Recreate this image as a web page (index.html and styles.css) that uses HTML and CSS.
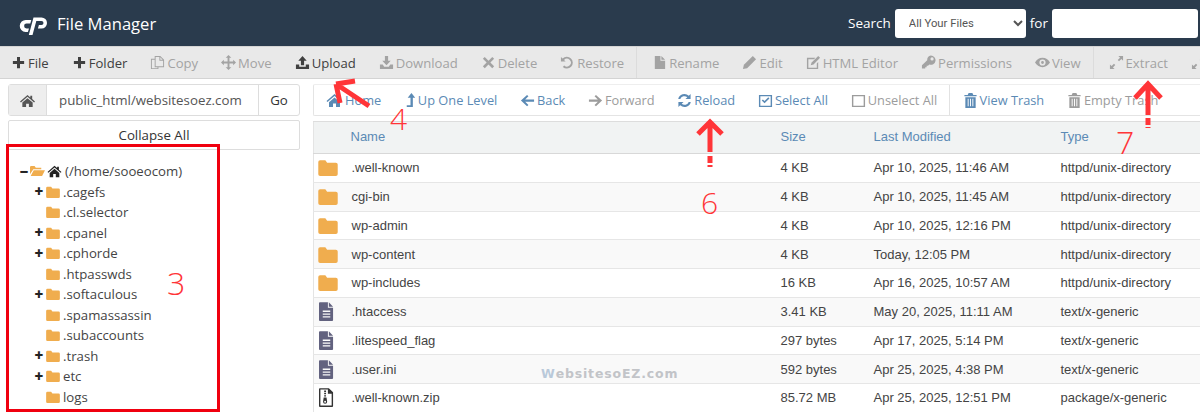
FILE: index.html
```html
<!DOCTYPE html>
<html lang="en">
<head>
<meta charset="utf-8">
<title>File Manager</title>
<link rel="stylesheet" href="styles.css">
</head>
<body>
<svg class="sprite" width="0" height="0">
  <symbol id="i-plus" viewBox="0 0 16 16"><path d="M6.400 2h3.200v4.400H14v3.200H9.600V14H6.400V9.600H2V6.400h4.400z"/></symbol>
  <symbol id="i-copy" viewBox="0 0 16 16"><path fill-rule="evenodd" d="M5 1h6l4 4v8H9v2H1V4h4zm1 1v10h8V6h-4V2zm5 .5V5h2.500zM2 5v9h6v-1H5V5z"/></symbol>
  <symbol id="i-move" viewBox="0 0 16 16"><path d="M8 0l3 3H9v4h4V5l3 3-3 3V9H9v4h2l-3 3-3-3h2V9H3v2L0 8l3-3v2h4V3H5z"/></symbol>
  <symbol id="i-upload" viewBox="0 0 16 16"><path d="M8 1l4.500 5H9.700v5H6.300V6H3.500zM1 10h3.500v2.500h7V10H15v5H1z"/></symbol>
  <symbol id="i-download" viewBox="0 0 16 16"><path d="M6.300 1h3.400v5h2.800L8 11 3.500 6h2.800zM1 10h3l1.500 2.500h5L12 10h3v5H1z"/></symbol>
  <symbol id="i-x" viewBox="0 0 16 16"><path d="M4 2l4 4 4-4 2 2-4 4 4 4-2 2-4-4-4 4-2-2 4-4-4-4z"/></symbol>
  <symbol id="i-undo" viewBox="0 0 16 16"><path d="M1 2l1.800 1.800A6.300 6.300 0 1 1 3 12.800l1.500-1.500a4.200 4.200 0 1 0-.2-6L6 7H1z"/></symbol>
  <symbol id="i-file" viewBox="0 0 16 16"><path d="M3 1h6v5h5v9H3zM10 1l4 4h-4z"/></symbol>
  <symbol id="i-pencil" viewBox="0 0 16 16"><path d="M11.500 1L15 4.500 5.500 14 1 15l1-4.500z"/></symbol>
  <symbol id="i-edit" viewBox="0 0 16 16"><path fill-rule="evenodd" d="M1 3h9L8.500 4.500H2.500v9h9V9L13 7.500V15H1z"/><path d="M13 1l2 2-7 7-3 1 1-3z"/></symbol>
  <symbol id="i-key" viewBox="0 0 16 16"><path fill-rule="evenodd" d="M10.500 0.500a5 5 0 1 1-1.700 9.700L7.500 11.500H6V13H4.500v1.500H1V11l5.600-5.500A5 5 0 0 1 10.500 0.500zm1.300 2a1.700 1.700 0 1 0 0 3.400 1.700 1.700 0 0 0 0-3.400z"/></symbol>
  <symbol id="i-eye" viewBox="0 0 16 16"><path fill-rule="evenodd" d="M8 3c3.500 0 6.300 2.200 8 5-1.700 2.800-4.500 5-8 5s-6.300-2.200-8-5c1.700-2.800 4.500-5 8-5zm0 1.700a3.300 3.300 0 1 0 0 6.600 3.300 3.300 0 0 0 0-6.600zM8 6.500A1.500 1.500 0 1 1 8 9.500 1.500 1.500 0 0 1 8 6.500z"/></symbol>
  <symbol id="i-expand" viewBox="0 0 16 16"><path d="M10 1h5v5l-1.800-1.800-2.500 2.500-1.400-1.400 2.500-2.500zM6 15H1v-5l1.800 1.800 2.500-2.500 1.400 1.400-2.500 2.500z"/></symbol>
  <symbol id="i-home" viewBox="0 0 16 16"><path d="M8 2l3 2.700V3h2v3.500L16 9l-1 1-7-6-7 6-1-1zM8 5.500l5.500 4.700V15H9.500v-3.500h-3V15H2.500v-4.800z"/></symbol>
  <symbol id="i-uplevel" viewBox="0 0 16 16"><path d="M9 0l4 5h-2.500v10H4v-2h4V5H5z"/></symbol>
  <symbol id="i-left" viewBox="0 0 16 16"><path d="M7.500 2l1.500 1.500L5.500 7H15v2.200H5.500L9 12.700l-1.500 1.500L1 8z"/></symbol>
  <symbol id="i-right" viewBox="0 0 16 16"><path d="M8.500 2L7 3.500 10.500 7H1v2.200h9.500L7 12.700l1.500 1.500L15 8z"/></symbol>
  <symbol id="i-reload" viewBox="0 0 16 16"><path d="M14.500 1v5.500H9l2-2A4.700 4.700 0 0 0 3.500 6.500H1.300A6.800 6.800 0 0 1 12.600 3zM1.500 15V9.500H7l-2 2a4.700 4.700 0 0 0 7.500-2h2.200A6.800 6.800 0 0 1 3.400 13z"/></symbol>
  <symbol id="i-check" viewBox="0 0 16 16"><path fill-rule="evenodd" d="M1 2h14v13H1zm1.500 1.500v10h11v-10z"/><path d="M4 8l1.200-1.200 1.800 1.800 4-4L12.200 5.800 7 11z"/></symbol>
  <symbol id="i-square" viewBox="0 0 16 16"><path fill-rule="evenodd" d="M1 2h14v13H1zm1.500 1.500v10h11v-10z"/></symbol>
  <symbol id="i-trash" viewBox="0 0 16 16"><path fill-rule="evenodd" d="M6 0h4l1 2h3.500v1.500h-13V2H5zM2.500 4.500h11V16h-11zM5 6v8h1V6zm2.500 0v8h1V6zM10 6v8h1V6z"/></symbol>
  <symbol id="i-folder" viewBox="0 0 16 14"><path d="M1.500 1h4.300l1.500 2h7.200A1.500 1.500 0 0 1 16 4.500v8A1.500 1.500 0 0 1 14.500 14h-13A1.500 1.500 0 0 1 0 12.500v-10A1.500 1.500 0 0 1 1.500 1z"/></symbol>
  <symbol id="i-folder-open" viewBox="0 0 18 14"><path d="M1 1h4.500L7 3h6.500v2H4L0 11V2zM4.500 6H18l-3.500 7H.8z"/></symbol>
  <symbol id="i-doc" viewBox="0 0 16 20"><path fill-rule="evenodd" d="M1 0h8.500v6H15v13a1 1 0 0 1-1 1H1a1 1 0 0 1-1-1V1a1 1 0 0 1 1-1zm3 9v1.500h8V9zm0 3v1.500h8V12zm0 3v1.500h8V15zM10.500 0L15 4.800h-4.500z"/></symbol>
  <symbol id="i-zip" viewBox="0 0 16 20"><path fill-rule="evenodd" d="M1 0h9.500L15 4.500V19a1 1 0 0 1-1 1H1a1 1 0 0 1-1-1V1a1 1 0 0 1 1-1zm.500 1.500v17h12V6h-4V1.500zm4 1h2V4h-2zm0 2.500h2v1.500h-2zm0 2.500h2V9h-2zM5 10h3l.7 4.500a1.700 1.700 0 1 1-4.400 0zm1.500 3.500a1 1 0 1 0 0 2 1 1 0 0 0 0-2z"/></symbol>
</svg>

<header class="topbar">
  <div class="brand">
    <svg class="logo" viewBox="0 0 28 18"><path d="M6.500 3h5.300l-1 3.600H7a2.400 2.400 0 0 0 0 4.800h2.500L8.400 15H6a6 6 0 0 1 .500-12zM14 0.500h8a5.500 5.500 0 0 1 0 11h-3.600l1-3.500H22a2 2 0 0 0 0-4h-5.200L13 18H9.300z"/></svg>
    <span class="brand-name">File Manager</span>
  </div>
  <form class="search">
    <label class="search-label">Search</label>
    <select class="search-select"><option>All Your Files</option></select>
    <span class="search-label">for</span>
    <input class="search-input" type="text">
  </form>
</header>

<nav class="toolbar">
  <a class="tool"><svg class="ic"><use href="#i-plus"/></svg>File</a>
  <a class="tool"><svg class="ic"><use href="#i-plus"/></svg>Folder</a>
  <a class="tool off"><svg class="ic"><use href="#i-copy"/></svg>Copy</a>
  <a class="tool off"><svg class="ic"><use href="#i-move"/></svg>Move</a>
  <a class="tool"><svg class="ic"><use href="#i-upload"/></svg>Upload</a>
  <a class="tool off"><svg class="ic"><use href="#i-download"/></svg>Download</a>
  <a class="tool off"><svg class="ic"><use href="#i-x"/></svg>Delete</a>
  <a class="tool off"><svg class="ic"><use href="#i-undo"/></svg>Restore</a>
  <span class="tool-sep"></span>
  <a class="tool off"><svg class="ic"><use href="#i-file"/></svg>Rename</a>
  <a class="tool off"><svg class="ic"><use href="#i-pencil"/></svg>Edit</a>
  <a class="tool off"><svg class="ic"><use href="#i-edit"/></svg>HTML Editor</a>
  <a class="tool off"><svg class="ic"><use href="#i-key"/></svg>Permissions</a>
  <a class="tool off"><svg class="ic"><use href="#i-eye"/></svg>View</a>
  <span class="tool-sep"></span>
  <a class="tool off"><svg class="ic"><use href="#i-expand"/></svg>Extract</a>
  <a class="tool off"><svg class="ic"><use href="#i-expand"/></svg>Compress</a>
</nav>

<main class="layout">
  <aside class="side">
    <div class="pathbar">
      <span class="path-home"><svg class="ic-home"><use href="#i-home"/></svg></span>
      <span class="path-value">public_html/websitesoez.com</span>
      <span class="path-go">Go</span>
    </div>
    <button class="collapse" type="button">Collapse All</button>
    <ul class="tree">
      <li class="tree-root"><span class="tw">−</span><svg class="f-open"><use href="#i-folder-open"/></svg><svg class="t-home"><use href="#i-home"/></svg>(/home/sooeocom)</li>
      <li class="tree-item"><span class="tw">+</span><svg class="f"><use href="#i-folder"/></svg>.cagefs</li>
      <li class="tree-item"><span class="tw"></span><svg class="f"><use href="#i-folder"/></svg>.cl.selector</li>
      <li class="tree-item"><span class="tw">+</span><svg class="f"><use href="#i-folder"/></svg>.cpanel</li>
      <li class="tree-item"><span class="tw">+</span><svg class="f"><use href="#i-folder"/></svg>.cphorde</li>
      <li class="tree-item"><span class="tw"></span><svg class="f"><use href="#i-folder"/></svg>.htpasswds</li>
      <li class="tree-item"><span class="tw">+</span><svg class="f"><use href="#i-folder"/></svg>.softaculous</li>
      <li class="tree-item"><span class="tw"></span><svg class="f"><use href="#i-folder"/></svg>.spamassassin</li>
      <li class="tree-item"><span class="tw"></span><svg class="f"><use href="#i-folder"/></svg>.subaccounts</li>
      <li class="tree-item"><span class="tw">+</span><svg class="f"><use href="#i-folder"/></svg>.trash</li>
      <li class="tree-item"><span class="tw">+</span><svg class="f"><use href="#i-folder"/></svg>etc</li>
      <li class="tree-item"><span class="tw"></span><svg class="f"><use href="#i-folder"/></svg>logs</li>
    </ul>
  </aside>

  <section class="content">
    <div class="navbar">
      <a class="nav"><svg class="ic ic-wide"><use href="#i-home"/></svg>Home</a>
      <a class="nav"><svg class="ic ic-thin"><use href="#i-uplevel"/></svg>Up One Level</a>
      <a class="nav"><svg class="ic"><use href="#i-left"/></svg>Back</a>
      <a class="nav off"><svg class="ic"><use href="#i-right"/></svg>Forward</a>
      <a class="nav"><svg class="ic"><use href="#i-reload"/></svg>Reload</a>
      <a class="nav"><svg class="ic"><use href="#i-check"/></svg>Select All</a>
      <a class="nav off"><svg class="ic"><use href="#i-square"/></svg>Unselect All</a>
      <span class="nav-sep"></span>
      <a class="nav"><svg class="ic"><use href="#i-trash"/></svg>View Trash</a>
      <a class="nav off"><svg class="ic"><use href="#i-trash"/></svg>Empty Trash</a>
    </div>
    <table class="files">
      <thead>
        <tr><th class="c-ico"></th><th class="c-name">Name</th><th class="c-size">Size</th><th class="c-mod">Last Modified</th><th>Type</th></tr>
      </thead>
      <tbody>
        <tr><td class="c-ico"><svg class="r-folder"><use href="#i-folder"/></svg></td><td class="t-name">.well-known</td><td>4 KB</td><td>Apr 10, 2025, 11:46 AM</td><td>httpd/unix-directory</td></tr>
        <tr><td class="c-ico"><svg class="r-folder"><use href="#i-folder"/></svg></td><td class="t-name">cgi-bin</td><td>4 KB</td><td>Apr 10, 2025, 11:45 AM</td><td>httpd/unix-directory</td></tr>
        <tr><td class="c-ico"><svg class="r-folder"><use href="#i-folder"/></svg></td><td class="t-name">wp-admin</td><td>4 KB</td><td>Apr 10, 2025, 12:16 PM</td><td>httpd/unix-directory</td></tr>
        <tr><td class="c-ico"><svg class="r-folder"><use href="#i-folder"/></svg></td><td class="t-name">wp-content</td><td>4 KB</td><td>Today, 12:05 PM</td><td>httpd/unix-directory</td></tr>
        <tr><td class="c-ico"><svg class="r-folder"><use href="#i-folder"/></svg></td><td class="t-name">wp-includes</td><td>16 KB</td><td>Apr 16, 2025, 10:57 AM</td><td>httpd/unix-directory</td></tr>
        <tr><td class="c-ico"><svg class="r-doc"><use href="#i-doc"/></svg></td><td class="t-name">.htaccess</td><td>3.41 KB</td><td>May 20, 2025, 11:11 AM</td><td>text/x-generic</td></tr>
        <tr><td class="c-ico"><svg class="r-doc"><use href="#i-doc"/></svg></td><td class="t-name">.litespeed_flag</td><td>297 bytes</td><td>Apr 17, 2025, 5:14 PM</td><td>text/x-generic</td></tr>
        <tr><td class="c-ico"><svg class="r-doc"><use href="#i-doc"/></svg></td><td class="t-name">.user.ini</td><td>592 bytes</td><td>Apr 25, 2025, 4:38 PM</td><td>text/x-generic</td></tr>
        <tr><td class="c-ico"><svg class="r-zip"><use href="#i-zip"/></svg></td><td class="t-name">.well-known.zip</td><td>85.72 MB</td><td>Apr 25, 2025, 12:51 PM</td><td>package/x-generic</td></tr>
      </tbody>
    </table>
  </section>
</main>

<div class="redbox"></div>
<svg class="marks" viewBox="0 0 1200 412">
  <g class="arrow">
    <path d="M369 106L336 84M336 84l19-3M336 84l4 19"/>
    <path d="M710 122v30M698 134l12-12 12 12"/>
    <path class="dash" d="M710 156v11"/>
    <path d="M1148 84v31M1135 98l13-14 13 14"/>
    <path class="dash" d="M1148 118v10"/>
  </g>
</svg>
<span class="num n3">3</span>
<span class="num n4">4</span>
<span class="num n6">6</span>
<span class="num n7">7</span>
<span class="watermark"><b>W</b>ebsitesoEZ.com</span>
</body>
</html>
```
FILE: styles.css
```css
* { box-sizing: border-box; }
html, body { margin: 0; padding: 0; }
body {
  width: 1200px;
  height: 412px;
  overflow: hidden;
  position: relative;
  background: #fff;
  font-family: "Open Sans", sans-serif;
  color: #333;
}
.sprite { position: absolute; }

.topbar {
  height: 46px;
  background: #2a3b4d;
  display: flex;
  align-items: center;
  justify-content: space-between;
  padding: 0 2px 0 19px;
  color: #fff;
}
.brand { display: flex; align-items: center; gap: 9px; }
.logo { width: 29px; height: 18px; margin-top: 5px; fill: #fff; }
.brand-name { font-size: 16.600px; }
.search { display: flex; align-items: center; gap: 4px; }
.search-label { font-size: 13.500px; }
.search-select {
  width: 131px;
  height: 29px;
  border: 0;
  border-radius: 3px;
  background: #fff;
  padding-left: 10px;
  font: 11.300px Roboto, sans-serif;
  color: #555;
}
.search-input {
  width: 146px;
  height: 29px;
  border: 0;
  border-radius: 3px;
  background: #fff;
}

.toolbar {
  height: 33px;
  background: #e9e9e9;
  border-top: 1px solid #d4d4d4;
  border-bottom: 1px solid #d4d4d4;
  display: flex;
  align-items: center;
  gap: 24px;
  padding-left: 12px;
  white-space: nowrap;
  overflow: hidden;
}
.tool {
  display: flex;
  align-items: center;
  gap: 2px;
  font-size: 13.100px;
  color: #404040;
  flex: none;
}
.tool.off { color: #a3a3a3; }
.ic { width: 15px; height: 15px; margin-left: -1px; fill: currentColor; flex: none; }
.ic-wide { width: 17px; height: 16px; margin-left: 0; }
.ic-thin { margin-left: -2px; margin-right: -2px; }
.tool-sep { width: 1px; height: 31px; background: #dcdcdc; margin: 0 -8px 0 -12px; flex: none; }

.layout { display: flex; align-items: flex-start; }
.side { width: 313px; flex: none; padding: 5px 13px 0 8px; }
.pathbar {
  display: flex;
  height: 32px;
  border: 1px solid #ddd;
  border-radius: 3px;
  align-items: stretch;
  font-size: 13.300px;
  color: #555;
}
.path-home {
  width: 38px;
  background: #eee;
  border-right: 1px solid #ddd;
  display: flex;
  align-items: center;
  justify-content: center;
}
.ic-home { width: 15px; height: 15px; fill: #555; }
.path-value { flex: 1; display: flex; align-items: center; padding-left: 12px; }
.path-go {
  width: 41px;
  border-left: 1px solid #ddd;
  display: flex;
  align-items: center;
  justify-content: center;
  color: #333;
}
.collapse {
  display: block;
  width: 100%;
  height: 30px;
  margin-top: 4px;
  background: #fff;
  border: 1px solid #ddd;
  border-radius: 2px;
  font: 13.300px "Open Sans", sans-serif;
  color: #333;
}
.tree { list-style: none; margin: 11px 0 0; padding: 0 0 0 10px; font-size: 13.200px; color: #444; }
.tree li { height: 20.500px; display: flex; align-items: center; white-space: nowrap; }
.tree-item { padding-left: 15px; }
.tw { width: 12px; font-weight: 800; font-size: 15px; color: #222; flex: none; text-align: center; line-height: 1; }
.f { width: 14px; height: 12px; fill: #f0ad4e; margin-right: 3px; flex: none; }
.tree-item .tw { margin-right: 1px; }
.f-open { width: 15px; height: 12px; fill: #f0ad4e; margin-right: 2px; flex: none; }
.t-home { width: 15px; height: 14px; fill: #222; margin-right: 3px; flex: none; }

.content { flex: 1; min-width: 0; padding-top: 5px; }
.navbar {
  height: 32px;
  display: flex;
  align-items: center;
  gap: 23.700px;
  padding-left: 12px;
  border: 1px solid #e4e4e4;
  border-right: 0;
  border-top-color: #eee;
  white-space: nowrap;
  border-radius: 2px 0 0 2px;
}
.nav {
  display: flex;
  align-items: center;
  gap: 2px;
  font-size: 12.800px;
  color: #5b8ab5;
  flex: none;
}
.nav.off { color: #9c9c9c; }
.nav-sep { width: 1px; height: 30px; background: #e2e2e2; margin: 0 -10px 0 -12px; flex: none; }

.files {
  width: 100%;
  margin-top: 5px;
  border-collapse: collapse;
  table-layout: fixed;
  font-family: "Liberation Sans", Arial, sans-serif;
  font-size: 13px;
  color: #444;
  border-left: 1px solid #e4e4e4;
}
.files th {
  height: 32px;
  background: #f1f3f3;
  border-top: 1px solid #ddd;
  border-bottom: 1px solid #d8d8d8;
  text-align: left;
  font-weight: 400;
  color: #5b8ab5;
  padding: 0 0 2px;
}
.files td {
  height: 28.750px;
  padding: 0;
  border-bottom: 1px solid #e6e6e6;
  white-space: nowrap;
}
.files .t-name { padding-left: 1px; }
.files tbody tr:nth-child(even) td { background: #f9f9f9; }
.c-ico { width: 37px; }
.c-name { width: 430px; }
.c-size { width: 93px; }
.c-mod { width: 187px; }
.c-ico svg { display: block; margin-left: 4px; }
.files .r-folder { width: 20px; height: 17px; fill: #f0ad4e; }
.files .r-doc { width: 15px; height: 19px; fill: #62627f; margin-left: 5px; }
.files .r-zip { width: 15px; height: 19px; fill: #333; margin-left: 5px; }

.redbox {
  position: absolute;
  left: 6px;
  top: 144px;
  width: 214px;
  height: 268px;
  border: 3px solid #f0000f;
}
.marks { position: absolute; left: 0; top: 0; width: 1200px; height: 412px; pointer-events: none; }
.arrow path { fill: none; stroke: #ff3538; stroke-width: 5; }
.arrow .dash { stroke-dasharray: 7 2; }
.num { position: absolute; font-family: "Open Sans", sans-serif; font-weight: 300; color: #ff3538; line-height: 1; }
.n3 { left: 167px; top: 267px; font-size: 32px; }
.n4 { left: 390px; top: 104px; font-size: 30px; }
.n6 { left: 701px; top: 188px; font-size: 30px; }
.n7 { left: 1116px; top: 126px; font-size: 32px; }
.watermark {
  position: absolute;
  left: 541px;
  top: 366px;
  font-family: "DejaVu Sans", sans-serif;
  font-weight: 700;
  font-size: 12.500px;
  letter-spacing: 0.830px;
  color: #c2c4c8;
}
.watermark b { color: #b9c9da; }
```
